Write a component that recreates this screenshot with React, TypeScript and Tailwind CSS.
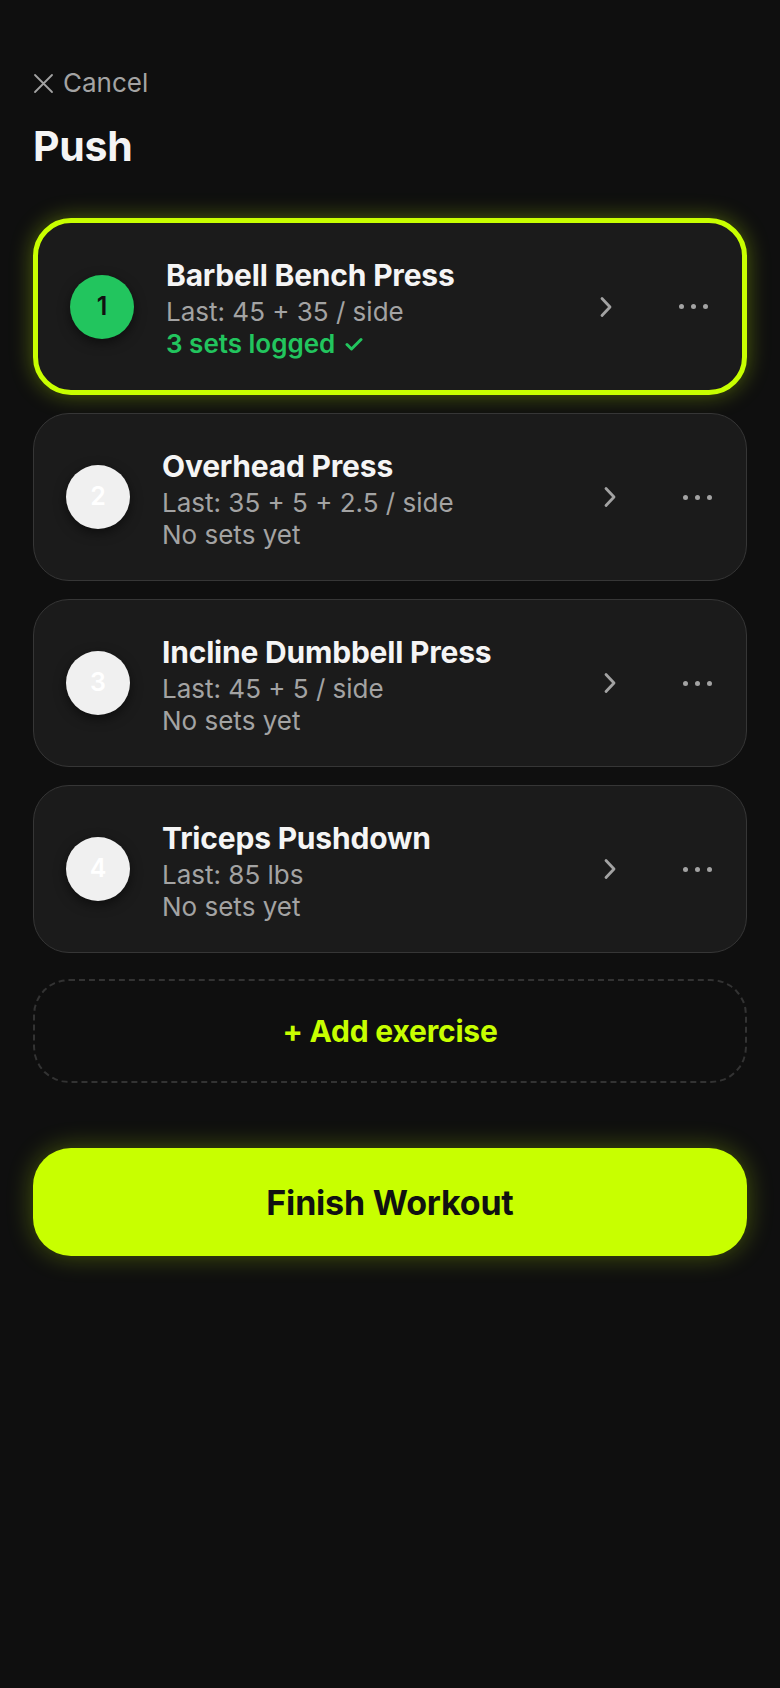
import React from "react";

type Ex = { n: number; title: string; last: string; status: string; done?: boolean };

const exercises: Ex[] = [
  { n: 1, title: "Barbell Bench Press", last: "Last: 45 + 35 / side", status: "3 sets logged", done: true },
  { n: 2, title: "Overhead Press", last: "Last: 35 + 5 + 2.5 / side", status: "No sets yet" },
  { n: 3, title: "Incline Dumbbell Press", last: "Last: 45 + 5 / side", status: "No sets yet" },
  { n: 4, title: "Triceps Pushdown", last: "Last: 85 lbs", status: "No sets yet" },
];

function Chevron() {
  return (
    <svg width="14" height="22" viewBox="0 0 14 22" fill="none" className="shrink-0">
      <path d="M3 2.5 L11 11 L3 19.5" stroke="#a3a3a3" strokeWidth="2.8" strokeLinecap="round" strokeLinejoin="round" />
    </svg>
  );
}

function Dots() {
  return (
    <div className="flex items-center gap-[7px] shrink-0">
      <span className="w-[5px] h-[5px] rounded-full bg-[#a3a3a3]" />
      <span className="w-[5px] h-[5px] rounded-full bg-[#a3a3a3]" />
      <span className="w-[5px] h-[5px] rounded-full bg-[#a3a3a3]" />
    </div>
  );
}

function Card({ ex }: { ex: Ex }) {
  const active = !!ex.done;
  return (
    <div
      className={
        active
          ? "h-[177px] rounded-[38px] border-[5px] border-[#c8ff00] bg-[#1b1b1b] shadow-[0_0_22px_rgba(200,255,0,0.35)] flex items-center pl-[32px] pr-[34px]"
          : "h-[168px] rounded-[36px] border border-[#363636] bg-[#1b1b1b] flex items-center pl-[32px] pr-[34px]"
      }
    >
      <div
        className={
          active
            ? "w-16 h-16 rounded-full bg-[#22c55e] flex items-center justify-center text-[25px] font-semibold text-[#111] shrink-0 shadow-[0_4px_12px_rgba(0,0,0,0.5)]"
            : "w-16 h-16 rounded-full bg-[#f0f0f0] flex items-center justify-center text-[25px] font-semibold text-white shrink-0 shadow-[0_4px_12px_rgba(0,0,0,0.5)]"
        }
      >
        {ex.n}
      </div>
      <div className="flex-1 ml-[32px] pt-[5px] flex flex-col">
        <div className="text-[30px] leading-[35px] font-bold text-[#f5f5f5] tracking-[-0.2px]">{ex.title}</div>
        <div className="mt-[3px] text-[26px] leading-[32px] text-[#a3a3a3]">{ex.last}</div>
        {active ? (
          <div className="text-[26px] leading-[32px] font-semibold text-[#22c55e] flex items-center gap-[10px]">
            <span>{ex.status}</span>
            <svg width="18" height="14" viewBox="0 0 18 14" fill="none">
              <path d="M2 7.5 L6.5 12 L16 2.5" stroke="#22c55e" strokeWidth="3" strokeLinecap="round" strokeLinejoin="round" />
            </svg>
          </div>
        ) : (
          <div className="text-[26px] leading-[32px] text-[#a3a3a3]">{ex.status}</div>
        )}
      </div>
      <Chevron />
      <div className="w-[66px]" />
      <Dots />
    </div>
  );
}

export default function App() {
  return (
    <div className="min-h-screen bg-[#0f0f0f] px-[33px] pt-[67px] pb-10" style={{ fontFamily: "Inter, 'Noto Sans', sans-serif" }}>
      <div className="flex items-center gap-[9px] h-[32px]">
        <svg width="21" height="21" viewBox="0 0 21 21" fill="none">
          <path d="M2 2 L19 19 M19 2 L2 19" stroke="#a3a3a3" strokeWidth="1.8" strokeLinecap="round" />
        </svg>
        <span className="text-[26px] leading-[32px] text-[#a3a3a3]">Cancel</span>
      </div>
      <h1 className="mt-[24px] text-[41px] leading-[46px] font-bold text-[#f5f5f5] tracking-[-0.3px]">Push</h1>

      <div className="mt-[49px] flex flex-col gap-[18px]">
        {exercises.map((ex) => (
          <Card key={ex.n} ex={ex} />
        ))}
      </div>

      <div className="mt-[26px] h-[104px] rounded-[36px] border-2 border-dashed border-[#333333] flex items-center justify-center">
        <span className="text-[30px] font-bold text-[#c8ff00] tracking-[-0.2px]">+ Add exercise</span>
      </div>

      <div className="mt-[65px] h-[108px] rounded-[38px] bg-[#c8ff00] shadow-[0_0_26px_rgba(200,255,0,0.3)] flex items-center justify-center">
        <span className="text-[34px] font-bold text-[#111111] tracking-[-0.2px]">Finish Workout</span>
      </div>
    </div>
  );
}
